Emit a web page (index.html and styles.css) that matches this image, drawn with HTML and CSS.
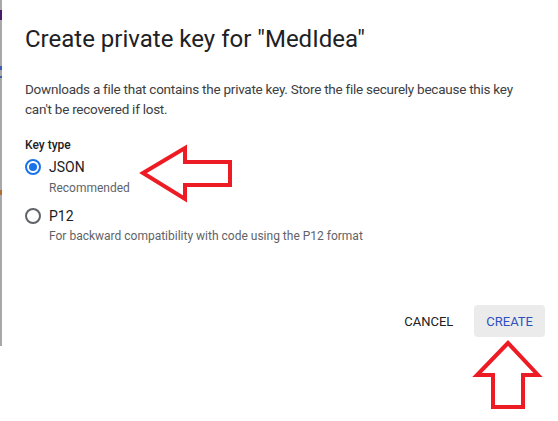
FILE: index.html
```html
<!DOCTYPE html>
<html>
<head>
<meta charset="utf-8">
<link rel="stylesheet" href="styles.css">
</head>
<body>
<div class="page">
  <div class="edge"></div>
  <div class="dialog">
    <h1 class="title">Create private key for "MedIdea"</h1>
    <p class="desc">Downloads a file that contains the private key. Store the file securely because this key can't be recovered if lost.</p>
    <div class="label">Key type</div>
    <div class="option">
      <span class="radio checked"><span class="dot"></span></span>
      <span class="opt-text">JSON</span>
    </div>
    <div class="hint hint-json">Recommended</div>
    <div class="option option-p12">
      <span class="radio"></span>
      <span class="opt-text">P12</span>
    </div>
    <div class="hint">For backward compatibility with code using the P12 format</div>
    <div class="actions">
      <button class="btn">CANCEL</button>
      <button class="btn btn-primary">CREATE</button>
    </div>
  </div>
</div>
<svg class="annotations" width="558" height="421" viewBox="0 0 558 421">
  <polygon points="143,173 185,148 185,162 230,162 230,185 185,185 185,199" fill="none" stroke="#ed1c24" stroke-width="4" stroke-linejoin="miter"/>
  <polygon points="508,343 477,375 493,375 493,407 523,407 523,375 538,375" fill="none" stroke="#ed1c24" stroke-width="4" stroke-linejoin="miter"/>
</svg>
</body>
</html>
```
FILE: styles.css
```css
html, body {
  margin: 0;
  padding: 0;
  background: #ffffff;
}
body {
  width: 558px;
  height: 421px;
  position: relative;
  overflow: hidden;
  font-family: Roboto, "Liberation Sans", Arial, sans-serif;
}
.page {
  display: flex;
  height: 346px;
}
.edge {
  width: 2px;
  flex: none;
  background: linear-gradient(to bottom,
    #a8a8a8 0px, #a8a8a8 10px,
    #4a1a6a 10px, #4a1a6a 20px,
    #a8a8a8 20px, #a8a8a8 66px,
    #3a5fb0 66px, #3a5fb0 70px,
    #a8a8a8 70px, #a8a8a8 76px,
    #3a5fb0 76px, #3a5fb0 78px,
    #a8a8a8 78px, #a8a8a8 190px,
    #b07030 190px, #b07030 195px,
    #a8a8a8 195px, #a8a8a8 346px);
}
.dialog {
  flex: 1;
  display: flex;
  flex-direction: column;
  padding: 23px 13px 9px 23px;
  background: #ffffff;
}
.title {
  margin: 0;
  font-size: 24px;
  line-height: 32px;
  font-weight: 400;
  color: #202124;
}
.desc {
  margin: 24px 0 0 0;
  width: 510px;
  font-size: 13.5px;
  line-height: 20px;
  letter-spacing: -0.25px;
  color: #3c4043;
}
.label {
  margin-top: 18px;
  font-size: 12px;
  line-height: 16px;
  font-weight: 500;
  color: #202124;
}
.option {
  display: flex;
  align-items: center;
  gap: 8px;
  height: 24px;
  margin-top: 2px;
}
.option-p12 {
  margin-top: 8px;
}
.radio {
  width: 16px;
  height: 16px;
  box-sizing: border-box;
  border: 2px solid #5f6368;
  border-radius: 50%;
  display: flex;
  align-items: center;
  justify-content: center;
  flex: none;
}
.radio.checked {
  border-color: #1a73e8;
}
.dot {
  width: 8px;
  height: 8px;
  border-radius: 50%;
  background: #1a73e8;
}
.opt-text {
  font-size: 14px;
  line-height: 20px;
  color: #202124;
}
.hint {
  margin-left: 24px;
  font-size: 12px;
  line-height: 16px;
  color: #5f6368;
}
.hint-json {
  margin-top: 1px;
}
.actions {
  margin-top: auto;
  display: flex;
  justify-content: flex-end;
  gap: 9px;
}
.btn {
  height: 32px;
  padding: 0 12px;
  border: none;
  border-radius: 4px;
  background: transparent;
  font-family: Roboto, "Liberation Sans", Arial, sans-serif;
  font-size: 13px;
  font-weight: 400;
  color: #202124;
  cursor: pointer;
}
.btn-primary {
  background: #ebebeb;
  color: #3050c0;
}
.annotations {
  position: absolute;
  left: 0;
  top: 0;
  pointer-events: none;
}
```
